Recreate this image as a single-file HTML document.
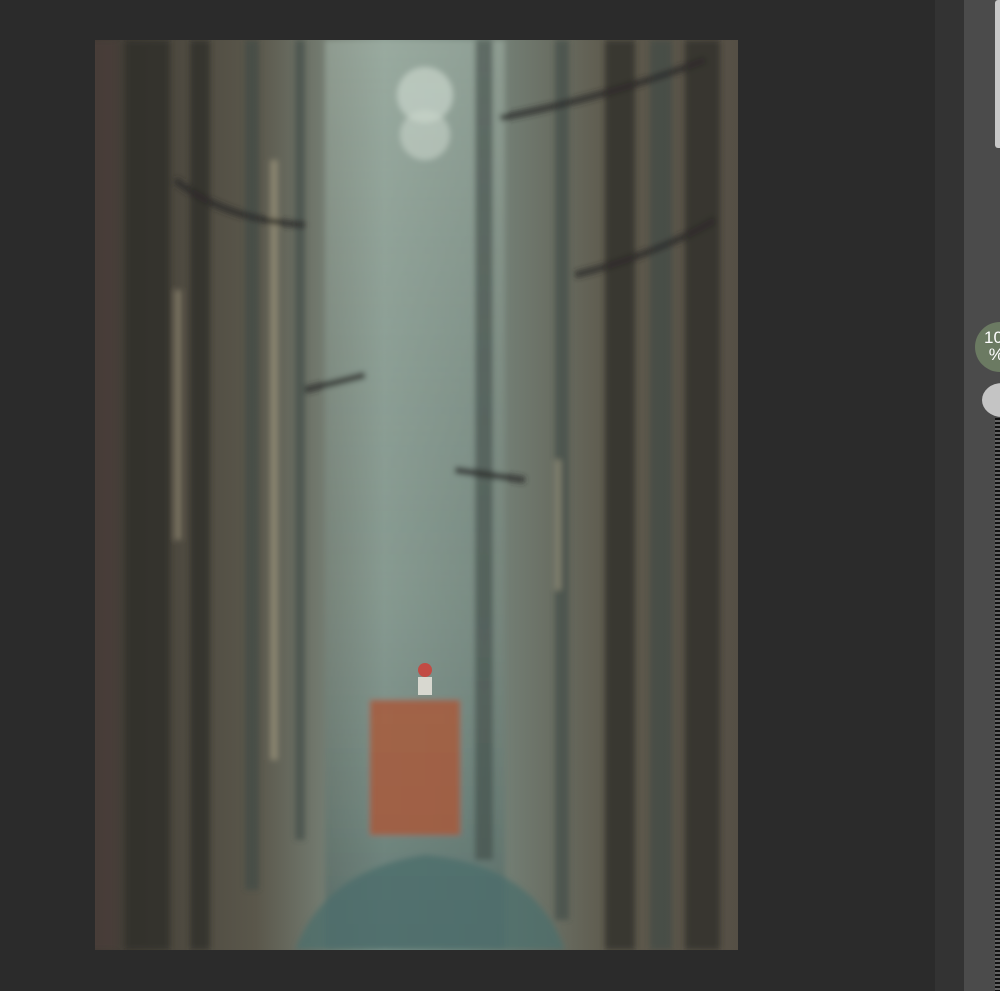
<!DOCTYPE html><html><head><style>
body{margin:0;width:1000px;height:991px;background:#2b2b2b;position:relative;overflow:hidden;font-family:"Liberation Sans",sans-serif}
.a{position:absolute}
</style></head><body>
<div class="a" style="left:935px;top:0;width:29px;height:991px;background:#333"></div>
<div class="a" style="left:964px;top:0;width:36px;height:991px;background:#4b4b4b"></div>
<div class="a" style="left:995px;top:0;width:5px;height:148px;background:#c8c8c8;border-radius:3px 0 0 3px"></div>
<div class="a" style="left:975px;top:322px;width:50px;height:50px;border-radius:50%;background:#6b7a62;color:#fff;font-size:17px;line-height:17px;padding-top:7px;box-sizing:border-box;padding-left:9px">10<br>&nbsp;%</div>
<div class="a" style="left:982px;top:383px;width:40px;height:34px;border-radius:50%;background:#c4c4c4"></div>
<div class="a" style="left:995px;top:418px;width:5px;height:573px;background:repeating-linear-gradient(#111 0 2px,#666 2px 4px)"></div>
<svg class="a" style="left:95px;top:40px" width="643" height="910" viewBox="0 0 643 910">
<defs>
<linearGradient id="bg" x1="0" x2="1"><stop offset="0" stop-color="#3f3a33"/><stop offset="0.25" stop-color="#5a574b"/><stop offset="0.45" stop-color="#8a9c92"/><stop offset="0.58" stop-color="#7a8b82"/><stop offset="0.8" stop-color="#5e5a4d"/><stop offset="1" stop-color="#554f45"/></linearGradient>
<linearGradient id="v" x1="0" y1="0" x2="0" y2="1"><stop offset="0" stop-color="#a8b8ac" stop-opacity=".5"/><stop offset=".6" stop-color="#7f948c" stop-opacity=".3"/><stop offset="1" stop-color="#46605e" stop-opacity=".6"/></linearGradient>
<filter id="b"><feGaussianBlur stdDeviation="3"/></filter>
<clipPath id="c"><rect width="643" height="910"/></clipPath>
</defs>
<g clip-path="url(#c)">
<rect width="643" height="910" fill="url(#bg)"/>
<g filter="url(#b)">
<rect x="230" width="180" height="910" fill="url(#v)"/>
<g fill="#2f2c28" opacity=".75">
<rect x="30" y="0" width="45" height="910"/><rect x="95" y="0" width="20" height="910"/><rect x="510" y="0" width="30" height="910"/><rect x="590" y="0" width="35" height="910"/><rect x="-5" y="0" width="27" height="910" fill="#4a3f38"/>
</g>
<g fill="#3f4a46" opacity=".6">
<rect x="150" y="0" width="14" height="850"/><rect x="200" y="0" width="10" height="800"/><rect x="380" y="0" width="18" height="820"/><rect x="460" y="0" width="14" height="880"/><rect x="555" y="0" width="22" height="910"/>
</g>
<g fill="#b8ae8e" opacity=".45">
<rect x="80" y="250" width="6" height="250"/><rect x="175" y="120" width="8" height="600"/><rect x="460" y="420" width="6" height="130"/>
</g>
<circle cx="330" cy="55" r="28" fill="#c8d4ca" opacity=".7"/><circle cx="330" cy="95" r="25" fill="#c8d4ca" opacity=".6"/>
<rect x="275" y="660" width="90" height="135" fill="#a85a3c" opacity=".85"/>
<path d="M200 910 Q230 830 330 815 Q440 825 470 910Z" fill="#4e6e6c" opacity=".8"/>
<g stroke="#2a2a26" stroke-width="7" fill="none" opacity=".75">
<path d="M80 140 Q130 180 210 185"/><path d="M405 78 Q520 55 610 20"/><path d="M480 235 Q560 215 620 180"/><path d="M210 350 L270 335"/><path d="M360 430 L430 440"/>
</g>
</g>
<circle cx="330" cy="630" r="7" fill="#c24b44"/><rect x="323" y="637" width="14" height="18" fill="#d8d8d0"/>
</g>
</svg>
</body></html>
